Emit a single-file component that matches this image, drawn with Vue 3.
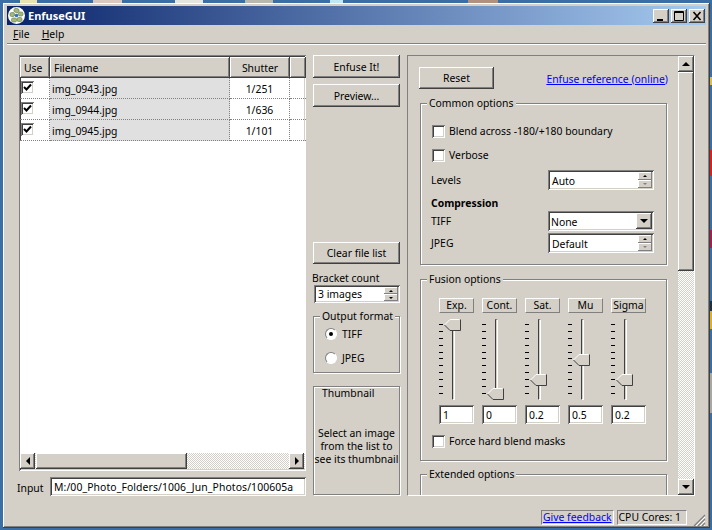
<script setup>
import { ref } from 'vue'

const files = ref([
  { name: 'img_0943.jpg', shutter: '1/251' },
  { name: 'img_0944.jpg', shutter: '1/636' },
  { name: 'img_0945.jpg', shutter: '1/101' }
])

const sliders = [
  { label: 'Exp.', value: '1', top: 0 },
  { label: 'Cont.', value: '0', top: 69 },
  { label: 'Sat.', value: '0.2', top: 55 },
  { label: 'Mu', value: '0.5', top: 35 },
  { label: 'Sigma', value: '0.2', top: 55 }
]

const ticks = 11

// bits of other windows showing around the edges of this one
const desktopBits = [
  { x: 20, y: 0, w: 17, h: 3, c: '#e8e4b0' },
  { x: 93, y: 0, w: 29, h: 3, c: '#d8c8c0' },
  { x: 175, y: 0, w: 28, h: 3, c: '#e4e4e0' },
  { x: 245, y: 0, w: 28, h: 3, c: '#b8b8b0' },
  { x: 330, y: 0, w: 13, h: 3, c: '#c0e8f0' },
  { x: 468, y: 0, w: 30, h: 3, c: '#b09080' },
  { x: 710, y: 77, w: 2, h: 8, c: '#d8c050' },
  { x: 710, y: 150, w: 2, h: 26, c: '#d82020' },
  { x: 710, y: 230, w: 2, h: 18, c: '#a02050' },
  { x: 710, y: 301, w: 2, h: 10, c: '#203040' },
  { x: 710, y: 311, w: 2, h: 18, c: '#d8b030' },
  { x: 710, y: 373, w: 2, h: 40, c: '#a8a8a0' }
]
</script>

<template>
  <div class="desktop">
    <span
      v-for="(bit, i) in desktopBits"
      :key="i"
      class="bit"
      :style="{ left: bit.x + 'px', top: bit.y + 'px', width: bit.w + 'px', height: bit.h + 'px', background: bit.c }"
    ></span>

    <div class="window raised">
      <div class="titlebar">
        <svg class="app-icon" width="17" height="17" viewBox="0 0 17 17">
          <circle cx="8.5" cy="8.5" r="8.5" fill="#fff" />
          <g fill="#a4b878" stroke="#6f8450" stroke-width="0.7">
            <rect x="6" y="1.5" width="5" height="4" rx="1.5" transform="rotate(20 8.5 3.5)" />
            <rect x="10.5" y="5" width="4.5" height="4" rx="1.5" />
            <rect x="9" y="10.5" width="5" height="4" rx="1.5" />
            <rect x="3.5" y="11" width="5" height="4" rx="1.5" />
            <rect x="2" y="5.5" width="4.5" height="4" rx="1.5" />
          </g>
          <circle cx="8.5" cy="8.5" r="1.8" fill="#2a78b8" />
        </svg>
        <span class="title-text">EnfuseGUI</span>
        <div class="caption-btns">
          <button class="caption-btn raised">
            <svg width="14" height="14" viewBox="0 0 14 14"><rect x="3" y="10" width="6" height="2" fill="#000" /></svg>
          </button>
          <button class="caption-btn raised">
            <svg width="14" height="14" viewBox="0 0 14 14"><path d="M2.5 2.5h9v9h-9z M2.5 3.5h9" fill="none" stroke="#000" /></svg>
          </button>
          <button class="caption-btn raised close">
            <svg width="14" height="14" viewBox="0 0 14 14"><path d="M3.5 3l7 8M10.5 3l-7 8" stroke="#000" stroke-width="1.6" fill="none" /></svg>
          </button>
        </div>
      </div>

      <div class="menubar">
        <span class="menu-item"><u>F</u>ile</span>
        <span class="menu-item"><u>H</u>elp</span>
      </div>

      <div class="main">
        <!-- file list -->
        <div class="left-col">
          <div class="file-table sunken">
            <div class="table-head">
              <div class="head-cell raised">Use</div>
              <div class="head-cell raised">Filename</div>
              <div class="head-cell raised centered">Shutter</div>
              <div class="head-cell raised"></div>
            </div>
            <div v-for="file in files" :key="file.name" class="table-row">
              <div class="cell">
                <span class="check sunken">
                  <svg width="13" height="13" viewBox="0 0 13 13"><path d="M3 6l2.5 2.5L10 3.5" fill="none" stroke="#000" stroke-width="2" /></svg>
                </span>
              </div>
              <div class="cell name-cell">{{ file.name }}</div>
              <div class="cell centered">{{ file.shutter }}</div>
              <div class="cell last-cell"></div>
            </div>
            <div class="table-fill"></div>
            <div class="hscroll hatch">
              <button class="scroll-btn raised"><span class="arrow left"></span></button>
              <div class="hthumb raised"></div>
              <button class="scroll-btn raised end"><span class="arrow right"></span></button>
            </div>
          </div>
          <div class="input-row">
            <span class="input-label">Input</span>
            <div class="field sunken">M:/00_Photo_Folders/1006_Jun_Photos/100605a</div>
          </div>
        </div>

        <!-- buttons -->
        <div class="mid-col">
          <button class="btn raised first-btn">Enfuse It!</button>
          <button class="btn raised preview-btn">Preview...</button>
          <button class="btn raised clear-btn">Clear file list</button>
          <div class="bracket-label">Bracket count</div>
          <div class="spin sunken bracket-spin">
            <span class="spin-text">3 images</span>
            <div class="spin-btns">
              <span class="spin-btn raised"><i class="tiny up"></i></span>
              <span class="spin-btn raised"><i class="tiny down"></i></span>
            </div>
          </div>
          <div class="group output-group">
            <span class="legend">Output format</span>
            <div class="radio-row"><span class="radio on"></span>TIFF</div>
            <div class="radio-row jpeg-row"><span class="radio"></span>JPEG</div>
          </div>
          <div class="group thumb-group">
            <div class="thumb-title">Thumbnail</div>
            <div class="thumb-text">Select an image<br>from the list to<br>see its thumbnail</div>
          </div>
        </div>

        <!-- options -->
        <div class="right-panel">
          <div class="options">
            <div class="options-top">
              <button class="btn raised reset-btn">Reset</button>
              <a class="link ref-link" href="#">Enfuse reference (online)</a>
            </div>

            <div class="group common-group">
              <span class="legend">Common options</span>
              <label class="check-row"><span class="check sunken"></span>Blend across -180/+180 boundary</label>
              <label class="check-row verbose-row"><span class="check sunken"></span>Verbose</label>
              <div class="form-row levels-row">
                <span>Levels</span>
                <div class="spin sunken form-ctl">
                  <span class="spin-text">Auto</span>
                  <div class="spin-btns">
                    <span class="spin-btn raised"><i class="tiny up"></i></span>
                    <span class="spin-btn raised"><i class="tiny down faded"></i></span>
                  </div>
                </div>
              </div>
              <div class="compression">Compression</div>
              <div class="form-row tiff-row">
                <span>TIFF</span>
                <div class="spin sunken form-ctl combo">
                  <span class="spin-text">None</span>
                  <span class="combo-btn raised"><span class="arrow down-arrow"></span></span>
                </div>
              </div>
              <div class="form-row jpeg-ctl-row">
                <span>JPEG</span>
                <div class="spin sunken form-ctl">
                  <span class="spin-text">Default</span>
                  <div class="spin-btns">
                    <span class="spin-btn raised"><i class="tiny up"></i></span>
                    <span class="spin-btn raised"><i class="tiny down faded"></i></span>
                  </div>
                </div>
              </div>
            </div>

            <div class="group fusion-group">
              <span class="legend">Fusion options</span>
              <div class="sliders">
                <div v-for="s in sliders" :key="s.label" class="slider-col">
                  <div class="slider-label">{{ s.label }}</div>
                  <div class="slider">
                    <div class="ticks"><i v-for="n in ticks" :key="n"></i></div>
                    <div class="track"></div>
                    <svg class="knob" :style="{ top: s.top + 'px' }" width="17" height="12" viewBox="0 0 17 12">
                      <path d="M0.5 6L6 0.5H16.5V11.5H6z" fill="#d4d0c8" />
                      <path d="M0.5 6L6 0.5H15.5" fill="none" stroke="#fff" />
                      <path d="M0.5 6L6 11.5H16.5V0.5" fill="none" stroke="#404040" />
                    </svg>
                  </div>
                  <div class="slider-value sunken">{{ s.value }}</div>
                </div>
              </div>
              <label class="check-row force-row"><span class="check sunken"></span>Force hard blend masks</label>
            </div>

            <div class="group extended-group">
              <span class="legend">Extended options</span>
            </div>
          </div>

          <div class="vscroll hatch">
            <button class="scroll-btn tall raised"><span class="arrow up-arrow"></span></button>
            <div class="vthumb raised"></div>
            <button class="scroll-btn tall raised end-v"><span class="arrow down-arrow"></span></button>
          </div>
        </div>
      </div>

      <div class="statusbar">
        <a class="status-box link" href="#">Give feedback</a>
        <span class="status-box cpu">CPU Cores: 1</span>
        <svg class="grip" width="13" height="13" viewBox="0 0 13 13">
          <path d="M12 1L1 12M12 5L5 12M12 9L9 12" stroke="#808080" stroke-width="1.2" fill="none" />
          <path d="M12 3L3 12M12 7L7 12M12 11L11 12" stroke="#fff" stroke-width="1" fill="none" />
        </svg>
      </div>
    </div>
  </div>
</template>

<style>
html, body {
  margin: 0;
  background: #3a6ea5;
}
</style>

<style scoped>
.desktop {
  position: relative;
  width: 712px;
  height: 530px;
  box-sizing: border-box;
  padding: 3px 2px 2px 3px;
  background: #3a6ea5;
  overflow: hidden;
  font-family: "Noto Sans", "Liberation Sans", Arial, sans-serif;
  font-size: 10.4px;
  color: #000;
}

.bit {
  position: absolute;
}

.raised {
  background-color: #d4d0c8;
  box-shadow: inset -1px -1px #404040, inset 1px 1px #fff, inset -2px -2px #808080, inset 2px 2px #d4d0c8;
}

.sunken {
  background-color: #fff;
  box-shadow: inset 1px 1px #808080, inset -1px -1px #fff, inset 2px 2px #404040, inset -2px -2px #d4d0c8;
}

.hatch {
  background: repeating-conic-gradient(#d4d0c8 0 25%, #fff 0 50%) 0 0 / 2px 2px;
}

.window {
  width: 707px;
  height: 525px;
  box-sizing: border-box;
  padding: 3px 4px 0;
  display: flex;
  flex-direction: column;
}

.titlebar {
  height: 19px;
  flex: none;
  display: flex;
  align-items: center;
  padding-left: 1px;
  background: linear-gradient(90deg, #0a246a, #a6caf0);
  color: #fff;
}

.app-icon {
  flex: none;
}

.title-text {
  margin-left: 3px;
  font-weight: bold;
  font-size: 11px;
}

.caption-btns {
  margin-left: auto;
  margin-right: 1px;
  margin-top: 1px;
  display: flex;
  gap: 2px;
}

.caption-btn {
  width: 16px;
  height: 14px;
  padding: 0;
  border: 0;
  display: flex;
  align-items: center;
  justify-content: center;
}

.menubar {
  height: 18px;
  flex: none;
  display: flex;
  align-items: center;
  gap: 12px;
  padding-left: 6px;
  border-bottom: 1px solid #808080;
  box-shadow: 0 1px #fff;
}

.main {
  flex: none;
  height: 441px;
  margin-top: 11px;
  padding-left: 12px;
  display: flex;
  gap: 7px;
}

.left-col {
  width: 287px;
  display: flex;
  flex-direction: column;
  gap: 6px;
}

.file-table {
  height: 416px;
  box-sizing: border-box;
  padding: 2px 1px 2px 1px;
  display: flex;
  flex-direction: column;
  overflow: hidden;
}

.table-head,
.table-row {
  display: grid;
  grid-template-columns: 30px 180px 60px 16px;
}

.table-head {
  height: 21px;
  flex: none;
}

.head-cell {
  display: flex;
  align-items: center;
  padding-left: 4px;
}

.centered {
  justify-content: center;
  padding-left: 0;
}

.table-row {
  height: 21px;
  flex: none;
}

.cell {
  display: flex;
  align-items: center;
  padding-top: 1px;
  box-sizing: border-box;
  border-right: 1px dotted #808080;
  border-bottom: 1px dotted #808080;
}

.name-cell {
  background: #e0e0e0;
  padding-left: 2px;
}

.last-cell {
  border-right: 0;
}

.check {
  flex: none;
  display: block;
  width: 13px;
  height: 13px;
}

.table-row .check {
  align-self: flex-start;
  margin: 2px 0 0 1px;
}

.table-fill {
  flex: 1;
  background: #fff;
}

.hscroll {
  height: 16px;
  flex: none;
  display: flex;
}

.scroll-btn {
  width: 15px;
  height: 16px;
  flex: none;
  padding: 0;
  border: 0;
  display: flex;
  align-items: center;
  justify-content: center;
}

.hthumb {
  width: 151px;
  margin-left: 1px;
}

.end {
  margin-left: auto;
  margin-right: 1px;
}

.arrow {
  display: block;
  width: 0;
  height: 0;
  border-style: solid;
  border-color: transparent;
}

.arrow.left {
  border-width: 4px 4px 4px 0;
  border-right-color: #000;
}

.arrow.right {
  border-width: 4px 0 4px 4px;
  border-left-color: #000;
}

.up-arrow {
  border-width: 0 4px 4px;
  border-bottom-color: #000;
}

.down-arrow {
  border-width: 4px 4px 0;
  border-top-color: #000;
}

.input-row {
  display: flex;
  align-items: center;
  height: 19px;
}

.input-label {
  width: 33px;
  flex: none;
  margin: 2px 0 0 -2px;
}

.field {
  flex: 1;
  height: 19px;
  box-sizing: border-box;
  padding: 0 4px;
  line-height: 21px;
  letter-spacing: 0.1px;
  white-space: nowrap;
  overflow: hidden;
}

.mid-col {
  width: 87px;
  flex: none;
  display: flex;
  flex-direction: column;
}

.btn {
  width: 100%;
  padding: 0;
  border: 0;
  font: inherit;
  color: #000;
  flex: none;
}

.first-btn,
.preview-btn {
  height: 23px;
}

.preview-btn {
  margin-top: 6px;
}

.clear-btn {
  height: 22px;
  margin-top: 135px;
}

.bracket-label {
  margin: 7px 0 0 -1px;
  line-height: 14px;
}

.spin {
  display: flex;
  align-items: center;
  box-sizing: border-box;
}

.spin-text {
  flex: 1;
  padding-left: 4px;
}

.spin-btns {
  width: 16px;
  height: 100%;
  box-sizing: border-box;
  padding: 2px 2px 2px 0;
  display: flex;
  flex-direction: column;
  flex: none;
}

.spin-btn {
  flex: 1;
  display: flex;
  align-items: center;
  justify-content: center;
  box-shadow: inset -1px -1px #808080, inset 1px 1px #fff;
}

.tiny {
  display: block;
  width: 0;
  height: 0;
  border-style: solid;
  border-color: transparent;
}

.tiny.up {
  border-width: 0 2px 2px;
  border-bottom-color: #000;
}

.tiny.down {
  border-width: 2px 2px 0;
  border-top-color: #000;
}

.tiny.faded {
  border-top-color: #808080;
}

.bracket-spin {
  height: 18px;
  margin-left: 1px;
}

.form-ctl .spin-text {
  padding-top: 1px;
}

.group {
  position: relative;
  box-sizing: border-box;
  border: 1px solid #808080;
  box-shadow: inset 1px 1px #fff, 1px 1px #fff;
}

.legend {
  position: absolute;
  top: -7px;
  left: 6px;
  padding: 0 2px;
  line-height: 12px;
  background: #d4d0c8;
  white-space: nowrap;
}

.output-group {
  height: 57px;
  margin-top: 13px;
  padding: 7px 0 0 11px;
}

.radio-row {
  display: flex;
  align-items: center;
  height: 14px;
  margin-top: 3px;
  gap: 5px;
}

.jpeg-row {
  margin-top: 10px;
}

.radio {
  width: 12px;
  height: 12px;
  flex: none;
  border-radius: 50%;
  background: #fff;
  box-sizing: border-box;
  border: 1px solid;
  border-color: #808080 #fff #fff #808080;
  display: flex;
  align-items: center;
  justify-content: center;
}

.radio.on::after {
  content: "";
  width: 4px;
  height: 4px;
  border-radius: 50%;
  background: #000;
}

.thumb-group {
  height: 109px;
  margin-top: 13px;
  display: flex;
  flex-direction: column;
}

.thumb-title {
  margin: 0 0 0 8px;
  line-height: 13px;
}

.thumb-text {
  margin-top: 27px;
  text-align: center;
  line-height: 13px;
  white-space: nowrap;
}

.right-panel {
  width: 288px;
  height: 441px;
  flex: none;
  box-sizing: border-box;
  border: 1px solid;
  border-color: #808080 #fff #fff #808080;
  display: flex;
  overflow: hidden;
}

.options {
  flex: 1;
  min-width: 0;
  padding: 11px 0 0 11px;
  overflow: hidden;
}

.options-top {
  display: flex;
  align-items: center;
  justify-content: space-between;
  width: 249px;
}

.reset-btn {
  width: 75px;
  height: 22px;
}

.link {
  color: #0000ff;
  text-decoration: underline;
}

.ref-link {
  margin-top: 1px;
}

.common-group {
  width: 247px;
  height: 162px;
  margin: 14px 0 0 1px;
  padding: 13px 12px 0 11px;
}

.check-row {
  display: flex;
  align-items: center;
  gap: 4px;
  height: 14px;
  margin-top: 7px;
}

.verbose-row {
  margin-top: 10px;
}

.form-row {
  display: flex;
  align-items: center;
  justify-content: space-between;
  margin-left: -1px;
}

.form-ctl {
  width: 106px;
  height: 20px;
}

.levels-row {
  margin-top: 8px;
}

.compression {
  margin: 6px 0 0 -1px;
  font-weight: bold;
  line-height: 14px;
}

.tiff-row {
  margin-top: 1px;
}

.combo-btn {
  width: 16px;
  height: 16px;
  margin-right: 2px;
  flex: none;
  display: flex;
  align-items: center;
  justify-content: center;
}

.combo .spin-text {
  padding-left: 3px;
}

.jpeg-ctl-row {
  margin-top: 2px;
}

.fusion-group {
  width: 247px;
  height: 182px;
  margin: 14px 0 0 1px;
  padding: 18px 0 0 18px;
}

.sliders {
  display: flex;
  gap: 8px;
}

.slider-col {
  width: 35px;
}

.slider-label {
  height: 15px;
  line-height: 13px;
  text-align: center;
  border: 1px solid;
  border-color: #fff #808080 #808080 #fff;
  box-sizing: border-box;
}

.slider {
  position: relative;
  height: 81px;
  margin-top: 6px;
}

.ticks {
  position: absolute;
  top: 5px;
  left: 0;
  height: 70px;
  display: flex;
  flex-direction: column;
  justify-content: space-between;
}

.ticks i {
  display: block;
  width: 4px;
  height: 1px;
  background: #000;
}

.track {
  position: absolute;
  top: 0;
  bottom: 0;
  left: 13px;
  width: 3px;
  background: #d4d0c8;
  box-sizing: border-box;
  border: 1px solid;
  border-color: #808080 #fff #fff #404040;
}

.knob {
  position: absolute;
  left: 5px;
}

.slider-value {
  height: 19px;
  margin-top: 5px;
  box-sizing: border-box;
  padding-left: 4px;
  line-height: 20px;
}

.force-row {
  margin: 10px 0 0 -7px;
}

.extended-group {
  width: 247px;
  height: 60px;
  margin: 13px 0 0 1px;
}

.vscroll {
  width: 16px;
  flex: none;
  display: flex;
  flex-direction: column;
  align-items: center;
}

.tall {
  width: 16px;
  height: 16px;
}

.vthumb {
  width: 16px;
  height: 199px;
  flex: none;
}

.end-v {
  margin-top: auto;
}

.statusbar {
  flex: 1;
  position: relative;
  display: flex;
  align-items: flex-start;
  padding: 14px 0 0 534px;
  gap: 3px;
}

.status-box {
  height: 15px;
  box-sizing: border-box;
  line-height: 13px;
  padding: 0 1px;
  border: 1px solid;
  border-color: #808080 #fff #fff #808080;
  white-space: nowrap;
}

.cpu {
  width: 70px;
}

.grip {
  position: absolute;
  right: 0;
  bottom: 1px;
}
</style>
